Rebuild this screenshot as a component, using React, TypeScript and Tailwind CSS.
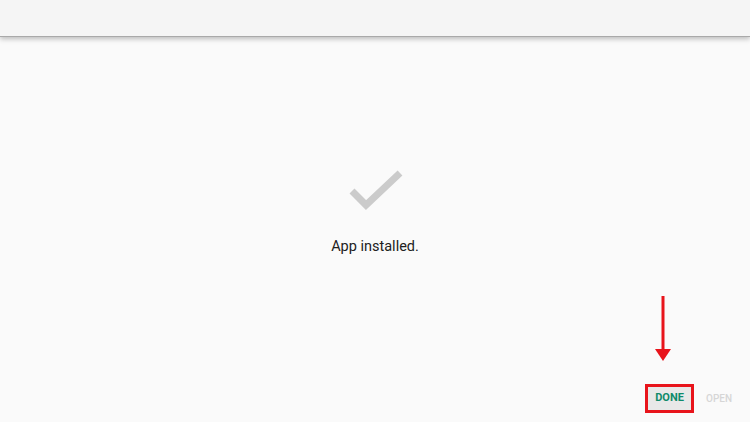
export default function App() {
  return (
    <div className="relative flex h-[422px] w-[750px] flex-col overflow-hidden bg-[#fafafa] font-['Roboto',sans-serif]">
      {/* top bar */}
      <div className="h-[37px] w-full shrink-0 border-b border-[#a9a9a9] bg-[#f5f5f5] shadow-[0_2px_5px_rgba(0,0,0,0.25)]" />

      <div className="flex flex-1 flex-col items-center pt-[132px]">
        <svg width="58" height="42" viewBox="0 0 58 42" className="ml-[2px]">
          <polyline
            points="5,22 19,36 53,4"
            fill="none"
            stroke="#cbcbcb"
            strokeWidth="7"
          />
        </svg>
        <p className="mt-[29px] text-[14.5px] leading-none text-[#212121]">App installed.</p>
      </div>

      {/* buttons */}
      <div className="flex items-center justify-end gap-[12px] pb-[9px] pr-[18px]">
        <div className="flex h-[29px] w-[49px] items-center justify-center border-[3px] border-[#e8141b] bg-[#e8e8e8]">
          <span className="text-[11px] font-bold text-[#0f8a6a]">DONE</span>
        </div>
        <span className="w-[26px] text-[10px] font-medium text-[#d6d6d6]">OPEN</span>
      </div>

      {/* annotation arrow */}
      <svg className="absolute left-[652px] top-[296px]" width="22" height="66" viewBox="0 0 22 66">
        <line x1="11" y1="0" x2="11" y2="56" stroke="#e8141b" strokeWidth="3" />
        <polygon points="3,53 19,53 11,65" fill="#e8141b" />
      </svg>
    </div>
  );
}
